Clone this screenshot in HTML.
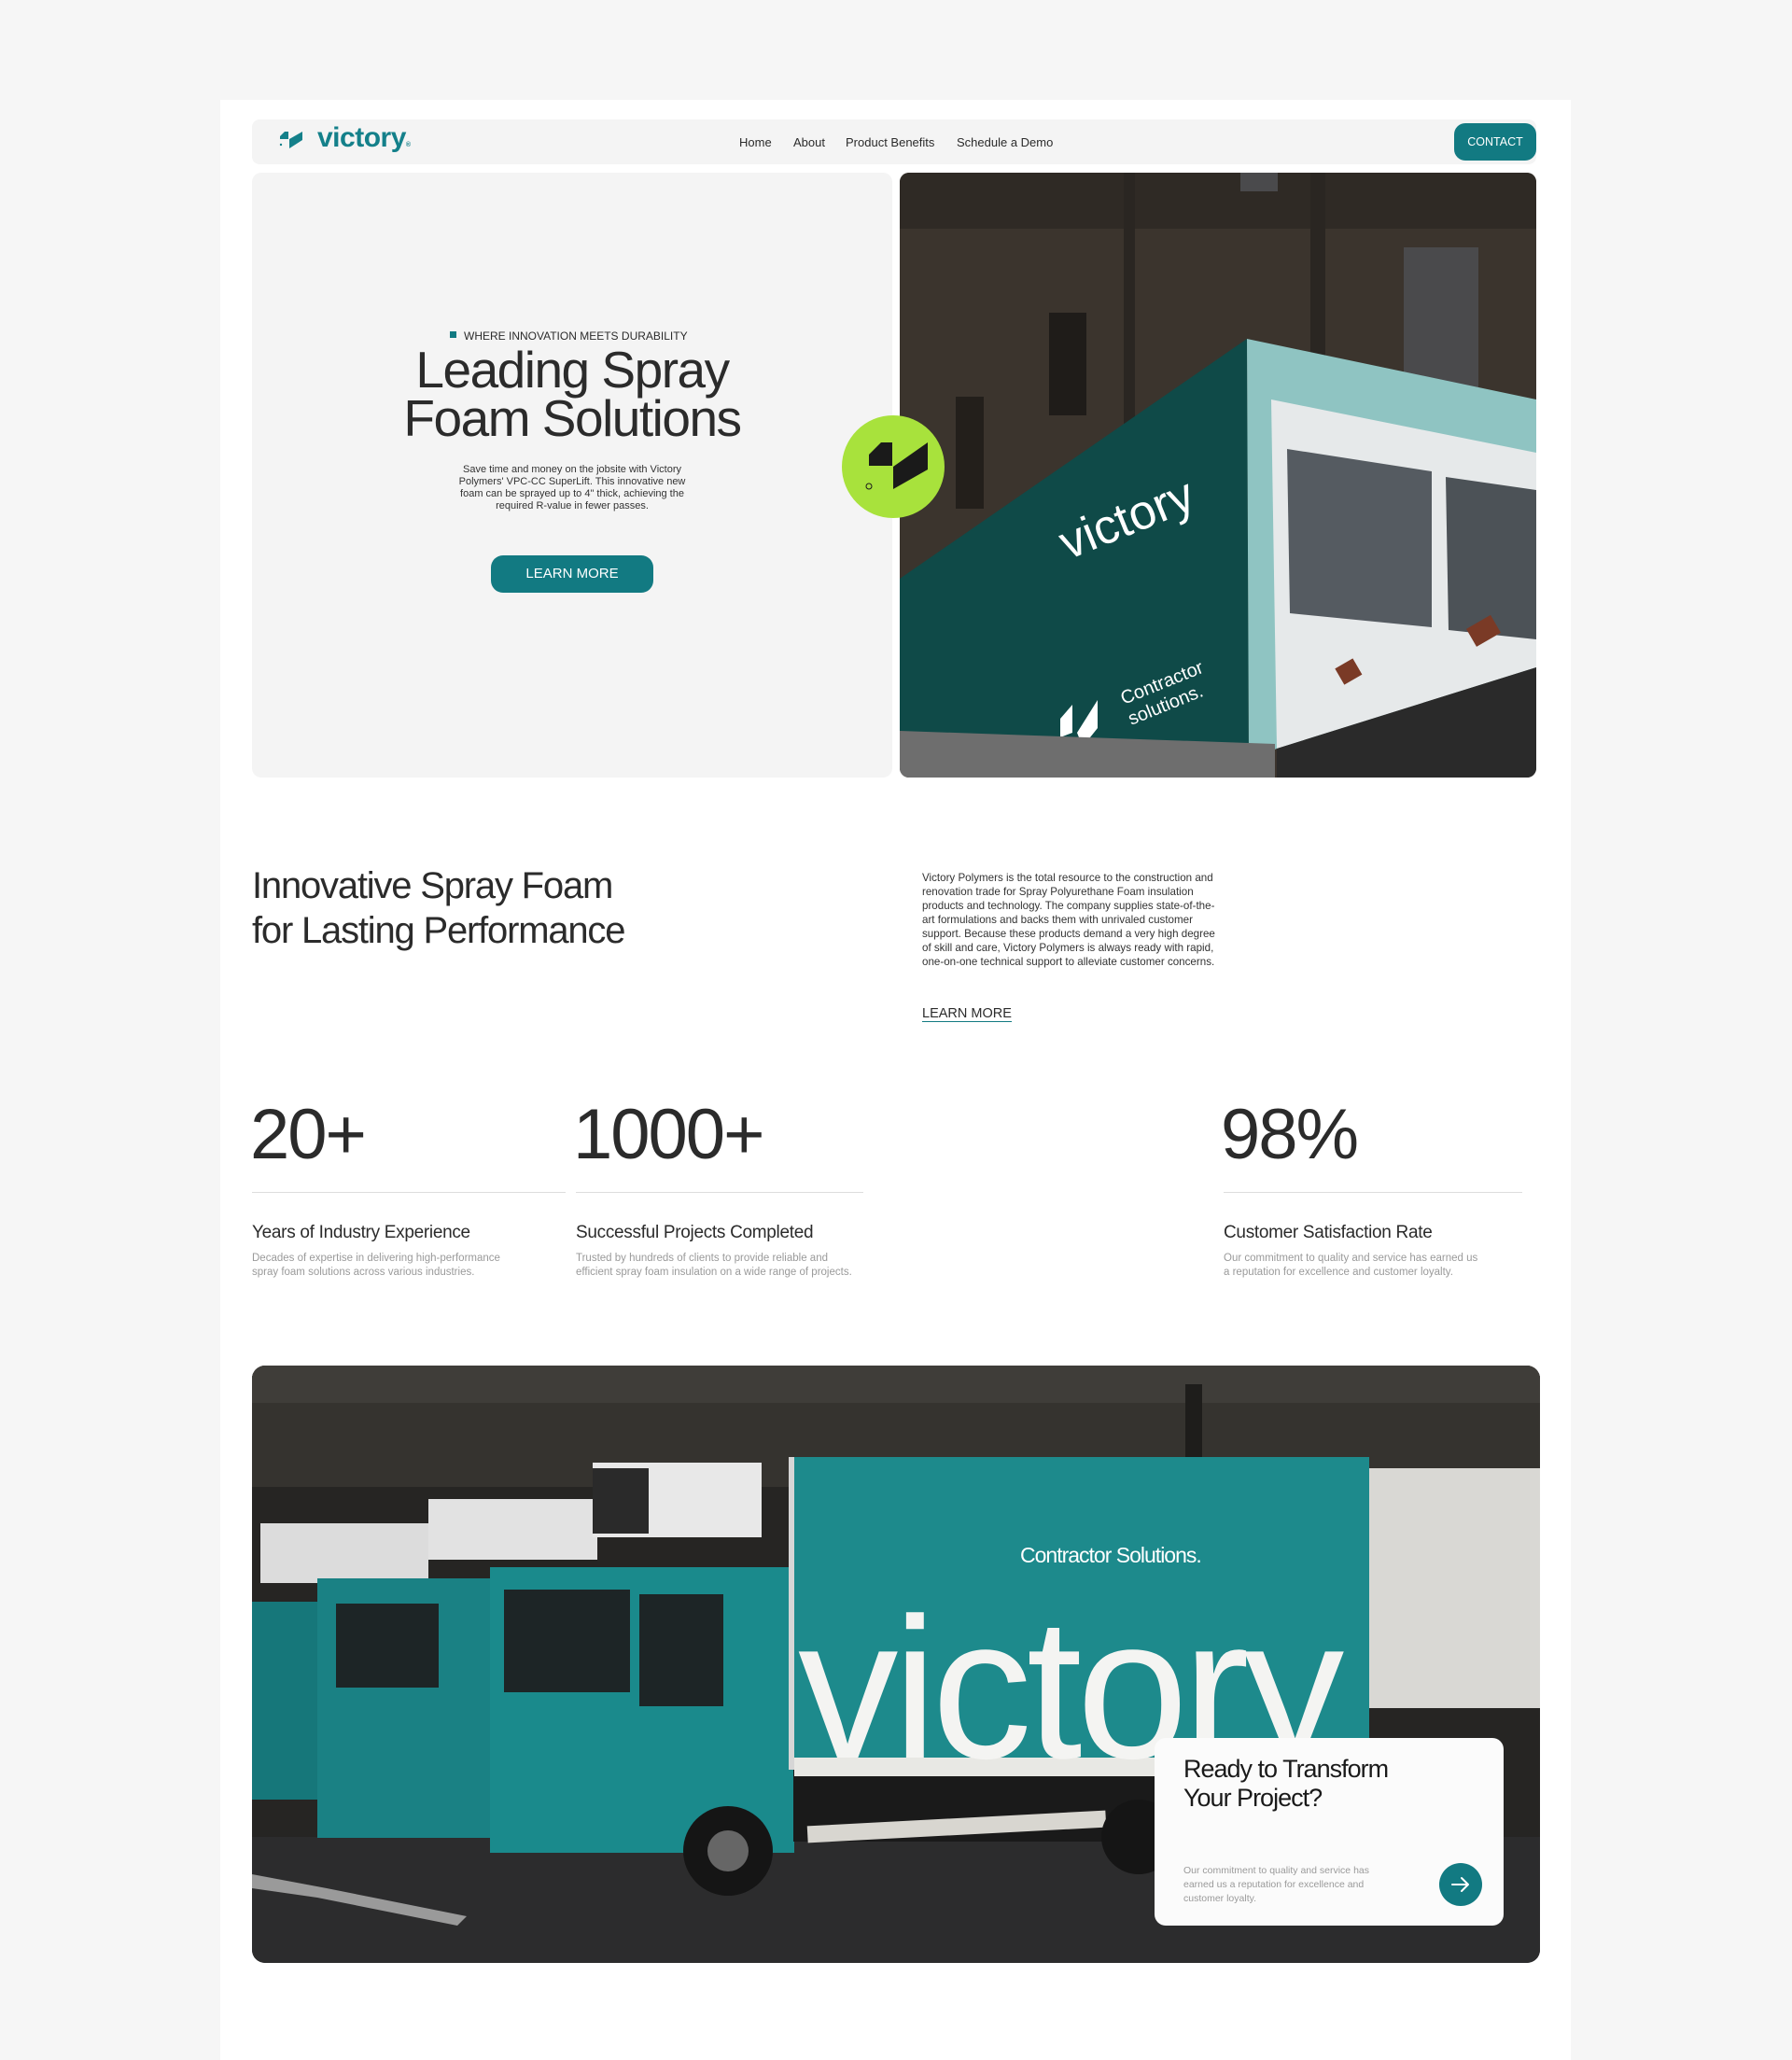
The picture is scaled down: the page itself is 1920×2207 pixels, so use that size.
<!DOCTYPE html>
<html><head><meta charset="utf-8"><style>
*{margin:0;padding:0;box-sizing:border-box}
body{width:1920px;height:2160px;background:#f6f6f6;font-family:"Liberation Sans",sans-serif;color:#2b2b2b;position:relative;overflow:hidden}
.card{position:absolute;left:236px;top:107px;width:1447px;height:2100px;background:#fff}
.abs{position:absolute}
.nav{left:270px;top:128px;width:1376px;height:48px;background:#f4f4f4;border-radius:8px}
.nav a{position:absolute;top:17px;font-size:13px;color:#2b2b2b;text-decoration:none}
.contact{left:1558px;top:132px;width:88px;height:40px;background:#127a82;color:#fff;border-radius:12px;font-size:12.5px;text-align:center;line-height:40px}
.hero{left:270px;top:185px;width:686px;height:648px;background:#f4f4f4;border-radius:10px}
.stat{font-size:76px;letter-spacing:-2px;color:#2b2b2b;top:1172px}
.line{height:1px;background:#ddd;top:1277px}
.lab{font-size:19px;top:1310px;letter-spacing:-0.3px}
.desc{font-size:11.5px;color:#9a9a9a;top:1341px;line-height:15px}
</style></head><body>
<div class="card"></div>
<div class="abs nav">
  <svg class="abs" style="left:27px;top:10px" width="32" height="26" viewBox="0 0 32 26"><path d="M3 8 L8 3 L12 3 L12 11 L3 11Z" fill="#14808a"/><path d="M13 11 L27 3 L27 12 L13 21Z" fill="#14808a"/><circle cx="4" cy="17" r="1.2" fill="#14808a"/></svg>
  <div class="abs" style="left:70px;top:3px;font-size:30px;font-weight:bold;color:#14808a;letter-spacing:-0.5px">victory<span style="font-size:7px">®</span></div>
  <a style="left:522px">Home</a><a style="left:580px">About</a><a style="left:636px">Product Benefits</a><a style="left:755px">Schedule a Demo</a>
</div>
<div class="abs contact">CONTACT</div>
<div class="abs hero">
  <div class="abs" style="left:212px;top:170px;width:7px;height:7px;background:#127a82"></div>
  <div class="abs" style="left:227px;top:168px;font-size:12px;color:#2b2b2b">WHERE INNOVATION MEETS DURABILITY</div>
  <div class="abs" style="left:0;width:686px;top:185px;text-align:center;font-size:55px;line-height:52px;letter-spacing:-1.5px">Leading Spray<br>Foam Solutions</div>
  <div class="abs" style="left:208px;width:270px;top:312px;text-align:center;font-size:11px;line-height:13px;color:#333">Save time and money on the jobsite with Victory Polymers' VPC-CC SuperLift. This innovative new foam can be sprayed up to 4" thick, achieving the required R-value in fewer passes.</div>
  <div class="abs" style="left:256px;top:410px;width:174px;height:40px;background:#127a82;border-radius:13px;color:#fff;font-size:15px;text-align:center;line-height:40px">LEARN MORE</div>
</div>
<svg class="abs" style="left:964px;top:185px;border-radius:10px" width="682" height="648" viewBox="0 0 682 648">
  <rect width="682" height="648" fill="#3b342d"/>
  <rect x="0" y="0" width="682" height="60" fill="#2f2a25"/>
  <rect x="160" y="150" width="40" height="110" fill="#1f1c19"/><rect x="60" y="240" width="30" height="120" fill="#231f1b"/>
  <rect x="540" y="80" width="80" height="150" fill="#4a4a4c"/><rect x="365" y="0" width="40" height="20" fill="#4a4a4c"/>
  <rect x="240" y="0" width="12" height="330" fill="#2a2622"/><rect x="440" y="0" width="16" height="300" fill="#2a2622"/>
  <polygon points="0,435 372,178 374,630 0,598" fill="#0f4a48"/>
  <polygon points="372,178 682,243 682,530 404,617 374,630" fill="#8fc4c2"/>
  <polygon points="398,243 682,300 682,530 404,617" fill="#e6e9ea"/>
  <polygon points="415,296 570,320 570,487 418,472" fill="#555b61"/>
  <polygon points="585,326 682,340 682,500 588,490" fill="#4c5257"/>
  <text x="0" y="0" transform="translate(180,415) rotate(-22)" font-size="52" fill="#fff" font-family="Liberation Sans">victory</text>
  <text transform="translate(240,570) rotate(-22)" font-size="20" fill="#fff">Contractor</text>
  <text transform="translate(248,592) rotate(-22)" font-size="20" fill="#fff">solutions.</text>
  <polygon points="172,585 185,570 185,600 172,605" fill="#fff"/><polygon points="190,600 212,565 212,595 196,615" fill="#fff"/>
  <polygon points="0,598 402,612 402,648 0,648" fill="#6e6e6e"/>
  <polygon points="404,617 682,530 682,648 404,648" fill="#2a2a2a"/>
  <rect x="470" y="525" width="22" height="20" fill="#7a3a26" transform="rotate(-30 480 535)"/><rect x="610" y="480" width="30" height="22" fill="#7a3a26" transform="rotate(-30 625 490)"/>
</svg>
<svg class="abs" style="left:902px;top:444px" width="112" height="112" viewBox="0 0 112 112">
  <circle cx="55" cy="56" r="55" fill="#a8e23c"/>
  <path d="M29 43 L42 30 L54 30 L54 55 L29 55Z" fill="#1a1a1a"/>
  <path d="M55 56 L92 30 L92 59 L55 80Z" fill="#1a1a1a"/>
  <circle cx="29" cy="77" r="3" fill="none" stroke="#1a1a1a" stroke-width="1"/>
</svg>
<div class="abs" style="left:270px;top:925px;font-size:40px;line-height:48px;letter-spacing:-1.2px">Innovative Spray Foam<br>for Lasting Performance</div>
<div class="abs" style="left:988px;top:933px;width:316px;font-size:11.6px;line-height:15px;color:#333">Victory Polymers is the total resource to the construction and renovation trade for Spray Polyurethane Foam insulation products and technology. The company supplies state-of-the-art formulations and backs them with unrivaled customer support. Because these products demand a very high degree of skill and care, Victory Polymers is always ready with rapid, one-on-one technical support to alleviate customer concerns.</div>
<div class="abs" style="left:988px;top:1078px;font-size:14.5px;border-bottom:1px solid #127a82;line-height:16px">LEARN MORE</div>
<div class="abs stat" style="left:268px">20+</div>
<div class="abs stat" style="left:614px">1000+</div>
<div class="abs stat" style="left:1308px">98%</div>
<div class="abs line" style="left:270px;width:336px"></div>
<div class="abs line" style="left:617px;width:308px"></div>
<div class="abs line" style="left:1311px;width:320px"></div>
<div class="abs lab" style="left:270px">Years of Industry Experience</div>
<div class="abs lab" style="left:617px">Successful Projects Completed</div>
<div class="abs lab" style="left:1311px">Customer Satisfaction Rate</div>
<div class="abs desc" style="left:270px">Decades of expertise in delivering high-performance<br>spray foam solutions across various industries.</div>
<div class="abs desc" style="left:617px">Trusted by hundreds of clients to provide reliable and<br>efficient spray foam insulation on a wide range of projects.</div>
<div class="abs desc" style="left:1311px">Our commitment to quality and service has earned us<br>a reputation for excellence and customer loyalty.</div>
<svg class="abs" style="left:270px;top:1463px;border-radius:14px" width="1380" height="640" viewBox="0 0 1380 640">
  <defs><clipPath id="tb"><rect x="581" y="98" width="616" height="335"/></clipPath></defs>
  <rect width="1380" height="640" fill="#262523"/>
  <rect width="1380" height="130" fill="#35332f"/>
  <rect x="0" y="0" width="1380" height="40" fill="#3f3d39"/>
  <rect x="1000" y="20" width="18" height="100" fill="#1e1d1b"/>
  <rect x="0" y="505" width="1380" height="135" fill="#2c2c2d"/>
  <polygon points="0,545 80,560 230,590 220,600 70,570 0,560" fill="#9a9a9a"/>
  <rect x="1197" y="110" width="183" height="257" fill="#d9d8d4"/>
  <rect x="0" y="253" width="70" height="212" fill="#16777a"/>
  <rect x="9" y="169" width="180" height="64" fill="#dcdcdc"/>
  <rect x="70" y="228" width="220" height="278" fill="#1a8184"/>
  <rect x="90" y="255" width="110" height="90" fill="#1d2526"/>
  <rect x="189" y="143" width="181" height="65" fill="#e2e2e2"/>
  <rect x="255" y="216" width="326" height="306" fill="#1a8a8c"/>
  <rect x="270" y="240" width="135" height="110" fill="#1d2526"/>
  <rect x="415" y="245" width="90" height="120" fill="#1d2526"/>
  <rect x="365" y="104" width="181" height="80" fill="#e8e8e8"/>
  <rect x="365" y="110" width="60" height="70" fill="#2a2a2a"/>
  <rect x="580" y="430" width="520" height="80" fill="#1a1a1a"/>
  <rect x="595" y="485" width="320" height="18" fill="#d8d6d0" transform="rotate(-3 755 494)"/>
  <circle cx="510" cy="520" r="48" fill="#151515"/><circle cx="510" cy="520" r="22" fill="#666"/>
  <circle cx="950" cy="505" r="40" fill="#151515"/>
  <rect x="575" y="98" width="8" height="335" fill="#d6d6d6"/>
  <rect x="581" y="98" width="616" height="335" fill="#1d8a8c"/>
  <rect x="581" y="420" width="616" height="20" fill="#e8e8e4"/>
  <g clip-path="url(#tb)"><text x="585" y="420" font-size="215" fill="#f4f4f2" letter-spacing="-6" font-family="Liberation Sans">victory</text></g>
  <text x="823" y="211" font-size="23" fill="#fff" letter-spacing="-1" font-family="Liberation Sans">Contractor Solutions.</text>
</svg>
<div class="abs" style="left:1237px;top:1862px;width:374px;height:201px;background:#fbfbfb;border-radius:12px">
  <div class="abs" style="left:31px;top:18px;font-size:27px;line-height:31px;letter-spacing:-1px;color:#1a1a1a">Ready to Transform<br>Your Project?</div>
  <div class="abs" style="left:31px;top:135px;font-size:10.5px;line-height:15px;color:#9a9a9a;width:230px">Our commitment to quality and service has earned us a reputation for excellence and customer loyalty.</div>
  <svg class="abs" style="left:305px;top:134px" width="46" height="46" viewBox="0 0 46 46"><circle cx="23" cy="23" r="23" fill="#127a82"/><path d="M14 23 H31 M24 16 L31 23 L24 30" stroke="#fff" stroke-width="2" fill="none" stroke-linecap="round" stroke-linejoin="round"/></svg>
</div>
</body></html>
